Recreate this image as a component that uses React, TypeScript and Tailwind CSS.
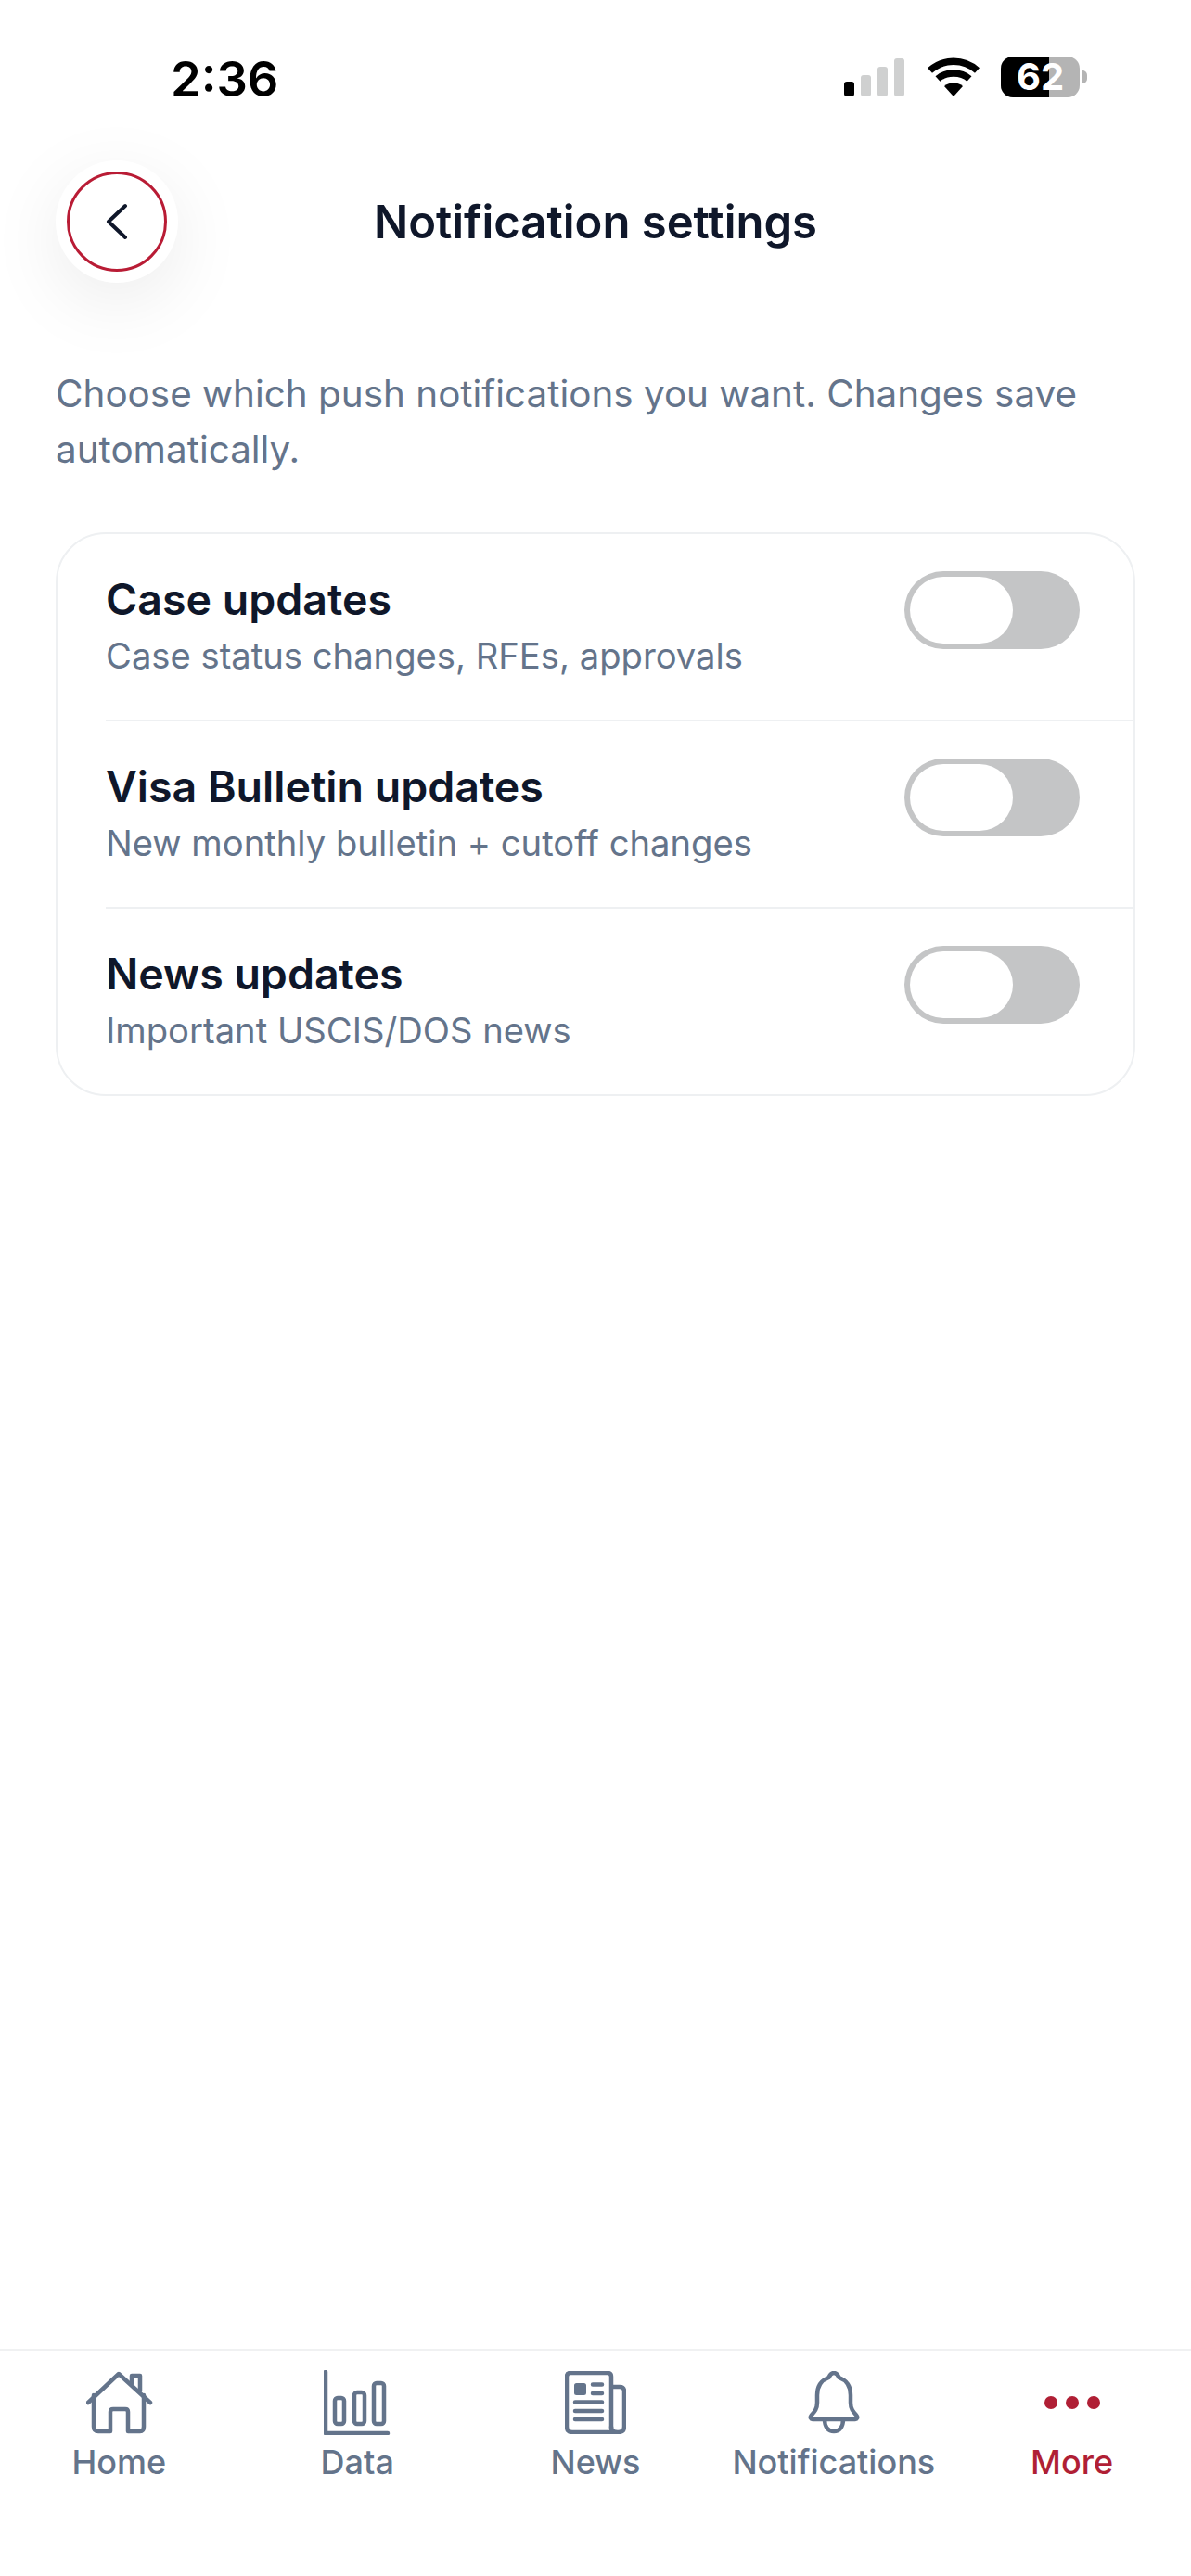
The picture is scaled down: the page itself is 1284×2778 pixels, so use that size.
const rows = [
  { title: "Case updates", sub: "Case status changes, RFEs, approvals" },
  { title: "Visa Bulletin updates", sub: "New monthly bulletin + cutoff changes" },
  { title: "News updates", sub: "Important USCIS/DOS news" },
]

function StatusBar() {
  return (
    <div className="h-[174px] shrink-0 flex items-start justify-between pl-[184px] pr-[112px] pt-[60px]">
      <span className="text-[52.5px] leading-[50px] font-semibold text-black">2:36</span>
      <div className="flex items-start mt-[1px]">
        {/* signal */}
        <div className="flex items-end gap-[7px] h-[41px] mt-[2px]">
          <div className="w-[11px] h-[16px] rounded-[3px] bg-black" />
          <div className="w-[11px] h-[23px] rounded-[3px] bg-[#cfd0d0]" />
          <div className="w-[11px] h-[32px] rounded-[3px] bg-[#cfd0d0]" />
          <div className="w-[11px] h-[41px] rounded-[3px] bg-[#cfd0d0]" />
        </div>
        {/* wifi */}
        <svg className="ml-[24px] mt-[1px]" width="58" height="42" viewBox="0 0 58 42" fill="none">
          <path d="M29 42 L19 31 C25 26 33 26 39 31 Z" fill="#000" />
          <path d="M12 23 C21 15 37 15 46 23" stroke="#000" strokeWidth="7.5" />
          <path d="M3.5 14 C18 1 40 1 54.5 14" stroke="#000" strokeWidth="7.5" />
        </svg>
        {/* battery */}
        <div className="ml-[22px] flex items-center">
          <div className="relative w-[85px] h-[44px] rounded-[13px] bg-[#b4b4b4]">
            <div className="w-[52px] h-full rounded-l-[13px] bg-black" />
            <span className="absolute inset-0 flex items-center justify-center text-[40px] leading-none font-bold text-white">62</span>
          </div>
          <div className="ml-[3px] w-[5px] h-[14px] rounded-r-full bg-[#b4b4b4]" />
        </div>
      </div>
    </div>
  )
}

function Header() {
  return (
    <div className="shrink-0 relative h-[132px] flex items-center justify-center">
      <div className="absolute left-[60px] top-[-1px] w-[132px] h-[132px] rounded-full bg-white shadow-[0_20px_80px_rgba(0,0,0,0.08)] flex items-center justify-center">
        <div className="w-[108px] h-[108px] rounded-full border-[3px] border-[#b91c35] flex items-center justify-center">
          <svg width="26" height="40" viewBox="0 0 26 40" fill="none">
            <path d="M22 3 L4 20 L22 37" stroke="#0f172a" strokeWidth="4" strokeLinecap="round" strokeLinejoin="round" />
          </svg>
        </div>
      </div>
      <h1 className="text-[49px] font-semibold text-[#0f172a]">Notification settings</h1>
    </div>
  )
}

function Toggle() {
  return (
    <div className="self-start mt-[40px] w-[189px] h-[84px] rounded-full bg-[#c4c5c6] p-[6px] shrink-0">
      <div className="w-[111px] h-[72px] rounded-full bg-white" />
    </div>
  )
}

function HomeIcon() {
  return (
    <svg width="72" height="68" viewBox="0 0 72 68" fill="none" stroke="#64748b" strokeWidth="4.5" strokeLinecap="round" strokeLinejoin="round" className="ml-[2px]">
      <path d="M2 34 L35 3 L69 34" />
      <path d="M8 26 V60 Q8 65 13 65 H26 V44 Q26 41 29 41 H42 Q45 41 45 44 V65 H58 Q62 65 62 60 V26" />
      <path d="M49 13 V5 H58 V21" />
    </svg>
  )
}

function DataIcon() {
  return (
    <svg width="72" height="70" viewBox="0 0 72 70" fill="none" stroke="#64748b" strokeWidth="4.5" strokeLinecap="round" strokeLinejoin="round">
      <path d="M2 2 V68 H69" />
      <rect x="12" y="30" width="10" height="28" rx="3" />
      <rect x="33" y="24" width="11" height="34" rx="3" />
      <rect x="54" y="14" width="11" height="44" rx="3" />
    </svg>
  )
}

function NewsIcon() {
  return (
    <svg width="66" height="68" viewBox="0 0 66 68" fill="none" stroke="#64748b" strokeWidth="4.5" strokeLinecap="round" strokeLinejoin="round">
      <path d="M50 62 V6 Q50 2 46 2 H6 Q2 2 2 6 V60 Q2 66 8 66 H57 Q64 66 64 60 V22 Q64 17 59 17 H50" />
      <path d="M50 60 Q50 66 56 66" />
      <rect x="11" y="14" width="11" height="11" rx="1.5" fill="#64748b" strokeWidth="2" />
      <path d="M30 14.5 H40 M30 24 H40 M11 33.5 H40 M11 43 H40 M11 52 H40" />
    </svg>
  )
}

function BellIcon() {
  return (
    <svg width="56" height="68" viewBox="0 0 56 68" fill="none" stroke="#64748b" strokeWidth="4.5" strokeLinecap="round" strokeLinejoin="round">
      <path d="M28 2 C24.5 2 23.5 5 22.5 7 C14 10 10 17 10 26 L10 34 C10 41 7 44 3.5 48 C2 50 3 52 5 52 L51 52 C53 52 54 50 52.5 48 C49 44 46 41 46 34 L46 26 C46 17 42 10 33.5 7 C32.5 5 31.5 2 28 2 Z" />
      <path d="M18 52 C18 60 22 65 28 65 C34 65 38 60 38 52" />
    </svg>
  )
}

function MoreIcon() {
  return (
    <div className="flex gap-[9px]">
      <div className="w-[14px] h-[14px] rounded-full bg-[#b01f35]" />
      <div className="w-[14px] h-[14px] rounded-full bg-[#b01f35]" />
      <div className="w-[14px] h-[14px] rounded-full bg-[#b01f35]" />
    </div>
  )
}

const tabs = [
  { label: "Home", icon: <HomeIcon /> },
  { label: "Data", icon: <DataIcon /> },
  { label: "News", icon: <NewsIcon /> },
  { label: "Notifications", icon: <BellIcon /> },
  { label: "More", icon: <MoreIcon />, active: true },
]

export default function App() {
  return (
    <div className="w-[1284px] h-[2778px] bg-white flex flex-col font-['Inter',sans-serif] overflow-hidden">
      <StatusBar />
      <Header />

      <p className="mt-[89px] px-[60px] text-[40.4px] leading-[60px] text-[#64748b]">
        Choose which push notifications you want. Changes save automatically.
      </p>

      <div className="mt-[59px] mx-[60px] rounded-[54px] border-2 border-[#eef0f2]">
        {rows.map((row, i) => (
          <div key={row.title} className="pl-[52px]">
            <div className={`pr-[58px] flex items-center justify-between ${i < 2 ? "border-b-2 border-[#eef0f2] h-[202px]" : "h-[200px]"}`}>
              <div>
                <div className="text-[46.5px] leading-[56px] font-semibold text-[#0f172a] mt-[-2px]">{row.title}</div>
                <div className="mt-[8px] text-[38.2px] leading-[50px] text-[#64748b]">{row.sub}</div>
              </div>
              <Toggle />
            </div>
          </div>
        ))}
      </div>

      <nav className="mt-auto h-[245px] border-t-2 border-[#f0f1f2] grid grid-cols-5 pt-[22px]">
        {tabs.map((tab) => (
          <div key={tab.label} className="flex flex-col items-center">
            <div className="h-[68px] flex items-center justify-center">{tab.icon}</div>
            <span className={`mt-[8px] text-[36px] leading-[44px] font-medium ${tab.active ? "text-[#b01f35]" : "text-[#64748b]"}`}>
              {tab.label}
            </span>
          </div>
        ))}
      </nav>
    </div>
  )
}
